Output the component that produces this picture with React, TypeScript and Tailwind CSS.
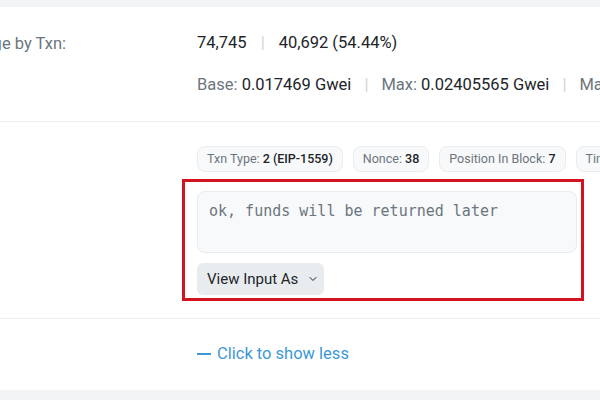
const Sep = ({ gap }: { gap: string }) => <span className={`${gap} text-[#ced4da]`}>|</span>;

const Badge = ({ label, value }: { label: string; value: string }) => (
    <span className="inline-flex h-[26px] shrink-0 items-center rounded-lg border border-[#e9ecef] bg-[#f8f9fa] px-[9px] text-[12.5px] text-[#6c757d]">
        {label}:&nbsp;<span className="font-medium text-[#212529]">{value}</span>
    </span>
);

export default function App() {
    return (
        <div className="h-[400px] w-[600px] overflow-hidden bg-[#f3f4f6] pt-[7px] font-['Roboto',sans-serif] text-[15px]">
            <div className="h-[383px] bg-white">
                {/* Gas usage row */}
                <div className="flex h-[115px] border-b border-[#eef0f2] pt-[25px] text-[16.5px]">
                    <div className="flex w-[66px] shrink-0 justify-end whitespace-nowrap text-[#6c757d]">
                        Gas Limit &amp; Usage by Txn:
                    </div>
                    <div className="ml-[131px] whitespace-nowrap text-[#212529]">
                        <div className="flex h-[22px] items-center">
                            74,745
                            <Sep gap="px-[14px]" />
                            40,692 (54.44%)
                        </div>
                        <div className="mt-[20px] flex h-[22px] items-center">
                            <span className="text-[#6c757d]">Base:&nbsp;</span>0.017469 Gwei
                            <Sep gap="px-[13px]" />
                            <span className="text-[#6c757d]">Max:&nbsp;</span>0.02405565 Gwei
                            <Sep gap="px-[13px]" />
                            <span className="text-[#6c757d]">Max Priority:&nbsp;</span>0.0015 Gwei
                        </div>
                    </div>
                </div>

                {/* Other attributes / input data row */}
                <div className="h-[197px] border-b border-[#eef0f2] pl-[197px] pt-[24px]">
                    <div className="flex gap-[10px] whitespace-nowrap">
                        <Badge label="Txn Type" value="2 (EIP-1559)" />
                        <Badge label="Nonce" value="38" />
                        <Badge label="Position In Block" value="7" />
                        <Badge label="Time" value="12" />
                    </div>
                    <div className="-ml-[15px] mt-[7px] w-[402px] border-[3px] border-[#d4141c] pb-[3px] pl-[12px] pr-[4px] pt-[9px]">
                        <div className="h-[62px] rounded-lg border border-[#e9ecef] bg-[#f8f9fa] px-[11px] pt-[8px] font-['DejaVu_Sans_Mono',monospace] text-[15px] text-[#6c757d]">
                            ok, funds will be returned later
                        </div>
                        <button className="mt-[10px] flex h-[32px] w-[127px] items-center rounded-md bg-[#e9ecef] pl-[10px] text-[15px] text-[#212529]">
                            View Input As
                            <svg className="ml-[9px] h-[12px] w-[12px]" viewBox="0 0 24 24" fill="none" stroke="currentColor" strokeWidth={2} strokeLinecap="round" strokeLinejoin="round">
                                <path d="M6 9l6 6 6-6" />
                            </svg>
                        </button>
                    </div>
                </div>

                {/* Toggle row */}
                <div className="flex h-[70px] items-center pl-[197px] text-[16.5px] text-[#3d98d3]">
                    <span className="mr-[6px] inline-block h-[2px] w-[14px] bg-[#3d98d3]" />
                    Click to show less
                </div>
            </div>
        </div>
    );
}
